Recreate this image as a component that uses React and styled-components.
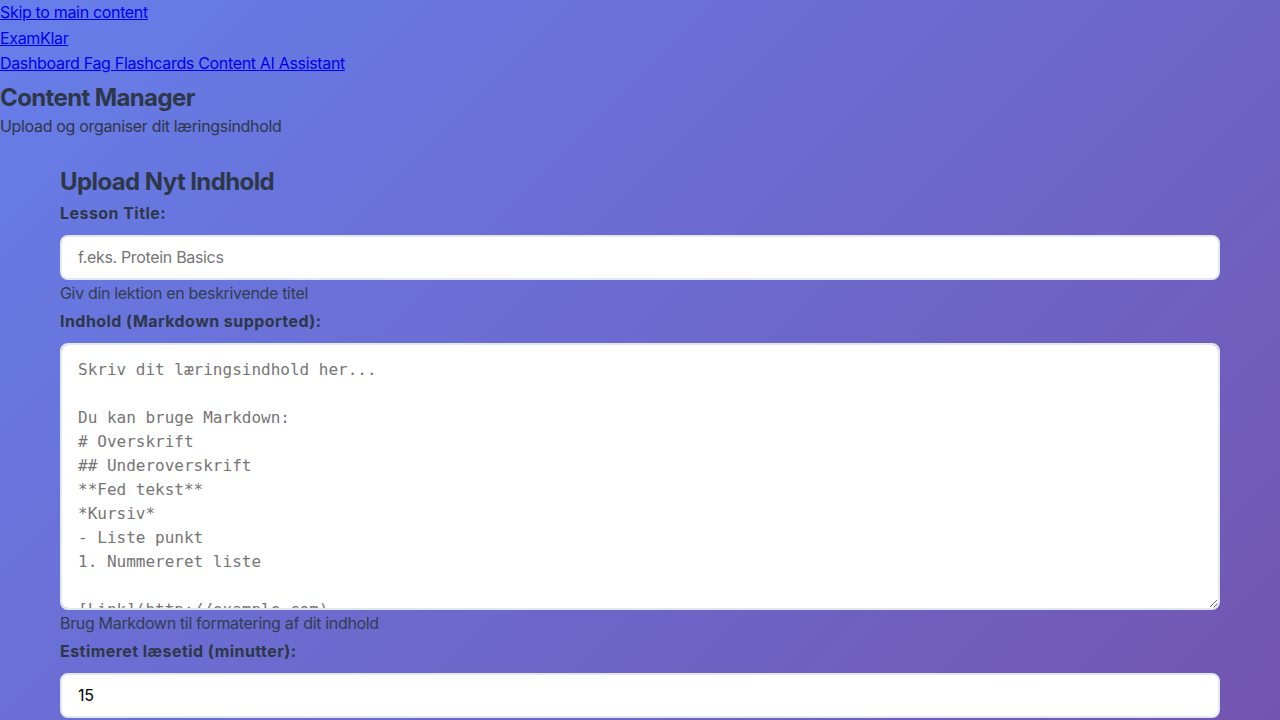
import React from "react";
import styled, { createGlobalStyle } from "styled-components";

const Global = createGlobalStyle`
  html, body { margin: 0; padding: 0; }
  body {
    font-family: Inter, "Liberation Sans", Arial, sans-serif;
    font-size: 16px;
    line-height: 1.6;
    letter-spacing: -0.33px;
    color: #2d3748;
  }
  * { box-sizing: border-box; }
`;

const Page = styled.div`
  min-height: 1220px;
  background: linear-gradient(135deg, #667eea 0%, #764ba2 100%);
`;

const LinkBlock = styled.div`
  line-height: 25.6px;
  a { color: #0000ee; text-decoration: underline; }
`;

const Header = styled.header``;

const Title = styled.h1`
  margin: 7px 0 1px;
  font-size: 24px;
  line-height: 28.8px;
  font-weight: 700;
  letter-spacing: -0.62px;
  color: #2d3748;
`;

const Subtitle = styled.p`
  margin: 0;
  line-height: 25.6px;
  color: #2d3748;
`;

const Main = styled.main`
  padding: 29px 60px 0;
`;

const SectionTitle = styled.h2`
  margin: 0 0 2px;
  font-size: 24px;
  line-height: 28.8px;
  font-weight: 700;
  letter-spacing: -0.6px;
  color: #2d3748;
`;

const Label = styled.label`
  display: block;
  font-weight: 700;
  line-height: 25.6px;
  letter-spacing: 0.45px;
  padding-top: 2px;
  margin-bottom: 8px;
  color: #2d3748;
`;

const fieldBase = `
  display: block;
  width: 100%;
  border: 2px solid #e2e8f0;
  border-radius: 8px;
  background: #fff;
  padding: 0 16px;
  font-size: 16px;
  color: #000;
  outline: none;
  &::placeholder { color: #757575; opacity: 1; }
`;

const Input = styled.input`
  ${fieldBase}
  height: 45px;
  font-family: Inter, "Liberation Sans", Arial, sans-serif;
  letter-spacing: -0.33px;
`;

const TextArea = styled.textarea`
  ${fieldBase}
  height: 267px;
  padding: 13px 16px 11px;
  font-family: "DejaVu Sans Mono", "Liberation Mono", monospace;
  line-height: 24px;
  letter-spacing: 0;
  resize: vertical;
`;

const Help = styled.small`
  display: block;
  font-size: 16px;
  line-height: 25.6px;
  padding-top: 1px;
  margin-bottom: 1px;
  color: #323d52;
`;

const Group = styled.div``;

const placeholder = `Skriv dit læringsindhold her...

Du kan bruge Markdown:
# Overskrift
## Underoverskrift
**Fed tekst**
*Kursiv*
- Liste punkt
1. Nummereret liste

[Link](http://example.com)`;

export default function App() {
  return (
    <Page>
      <Global />
      <LinkBlock><a href="#main">Skip to main content</a></LinkBlock>
      <LinkBlock><a href="#">ExamKlar</a></LinkBlock>
      <LinkBlock>
        <a href="#">Dashboard </a><a href="#">Fag </a><a href="#">Flashcards </a>
        <a href="#">Content </a><a href="#">AI Assistant</a>
      </LinkBlock>
      <Header>
        <Title>Content Manager</Title>
        <Subtitle>Upload og organiser dit læringsindhold</Subtitle>
      </Header>
      <Main id="main">
        <SectionTitle>Upload Nyt Indhold</SectionTitle>
        <Group>
          <Label htmlFor="title">Lesson Title:</Label>
          <Input id="title" placeholder="f.eks. Protein Basics" />
          <Help>Giv din lektion en beskrivende titel</Help>
        </Group>
        <Group>
          <Label htmlFor="content">Indhold (Markdown supported):</Label>
          <TextArea id="content" placeholder={placeholder} />
          <Help>Brug Markdown til formatering af dit indhold</Help>
        </Group>
        <Group>
          <Label htmlFor="time">Estimeret læsetid (minutter):</Label>
          <Input id="time" type="number" defaultValue="15" />
        </Group>
      </Main>
    </Page>
  );
}
